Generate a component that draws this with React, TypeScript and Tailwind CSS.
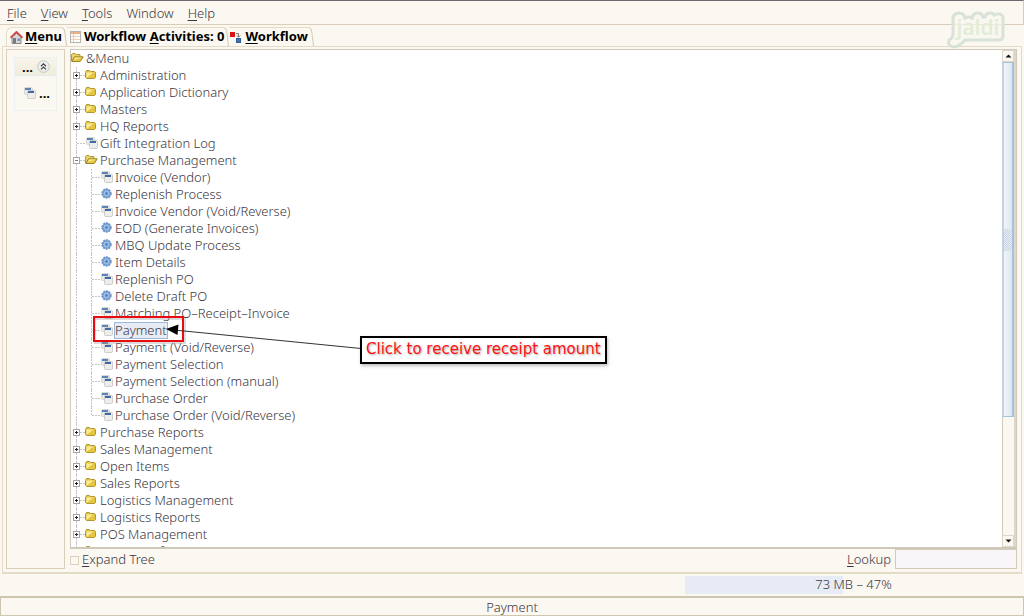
import React from 'react';
import clsx from 'clsx';

type IconKind = 'folder' | 'folderOpen' | 'window' | 'process';

interface TreeNode {
  label: string;
  icon: IconKind;
  children?: TreeNode[];
  expandable?: boolean;
}

const folder = (label: string): TreeNode => ({ label, icon: 'folder', expandable: true });
const win = (label: string): TreeNode => ({ label, icon: 'window' });
const proc = (label: string): TreeNode => ({ label, icon: 'process' });

const nodes: TreeNode[] = [
  folder('Administration'),
  folder('Application Dictionary'),
  folder('Masters'),
  folder('HQ Reports'),
  win('Gift Integration Log'),
  {
    label: 'Purchase Management',
    icon: 'folderOpen',
    expandable: true,
    children: [
      win('Invoice (Vendor)'),
      proc('Replenish Process'),
      win('Invoice Vendor (Void/Reverse)'),
      proc('EOD (Generate Invoices)'),
      proc('MBQ Update Process'),
      proc('Item Details'),
      win('Replenish PO'),
      proc('Delete Draft PO'),
      win('Matching PO–Receipt–Invoice'),
      win('Payment'),
      win('Payment (Void/Reverse)'),
      win('Payment Selection'),
      win('Payment Selection (manual)'),
      win('Purchase Order'),
      win('Purchase Order (Void/Reverse)'),
    ],
  },
  folder('Purchase Reports'),
  folder('Sales Management'),
  folder('Open Items'),
  folder('Sales Reports'),
  folder('Logistics Management'),
  folder('Logistics Reports'),
  folder('POS Management'),
  folder('Data Interface'),
];

const WindowIcon: React.FC = () => (
  <svg width="13" height="13" viewBox="0 0 13 13" className="shrink-0">
    <rect x="0.5" y="0.5" width="8" height="7" rx="1" fill="#e9e9e7" stroke="#d6d6d2" />
    <rect x="1" y="1" width="6" height="2" fill="#5d84b8" />
    <rect x="3.5" y="3.5" width="8" height="8" rx="1" fill="#ededeb" stroke="#cdcdc9" />
    <rect x="4" y="4" width="6" height="2" fill="#3f6aa6" />
  </svg>
);

const ProcessIcon: React.FC = () => (
  <svg width="13" height="13" viewBox="0 0 13 13" className="shrink-0">
    <circle cx="5.5" cy="5.5" r="4.4" fill="#7ba3d6" stroke="#6a95cc" strokeWidth="1.6" strokeDasharray="2 0.8" />
    <circle cx="5.5" cy="5.5" r="2.3" fill="none" stroke="#b4cdec" strokeWidth="0.8" />
    <circle cx="5.5" cy="5.5" r="1" fill="#4a78b4" />
  </svg>
);

const FolderIcon: React.FC = () => (
  <svg width="14" height="13" viewBox="0 0 14 13" className="shrink-0">
    <path d="M0.5 3.5 L1.5 1.5 H4.5 L5.5 2.5 H9.5 L10.5 3.5 V8.5 L9.5 9.5 H1.5 L0.5 8.5 Z" fill="#e6c63e" stroke="#ae9836" />
    <path d="M1.5 3.5 H8.5 L2 8.5 H1.5 Z" fill="#f9eb9a" />
  </svg>
);

const FolderOpenIcon: React.FC = () => (
  <svg width="14" height="13" viewBox="0 0 14 13" className="shrink-0">
    <path d="M0.5 9 V2.5 L1.5 1.5 H4 L5 2.5 H9 V4.5" fill="#ead26a" stroke="#ae9836" />
    <path d="M0.8 9.5 L3.5 4.8 H12.2 L9.3 9.5 Z" fill="#e8c840" stroke="#9c8726" />
    <path d="M4 5.5 H10.5 L3 8 Z" fill="#f9eb9a" />
  </svg>
);

const icons: Record<IconKind, React.FC> = {
  folder: FolderIcon,
  folderOpen: FolderOpenIcon,
  window: WindowIcon,
  process: ProcessIcon,
};

// Dotted connector drawn left of each row
const Guide: React.FC<{ last?: boolean; branch?: boolean }> = ({ last, branch = true }) => (
  <svg width="15" height="17" viewBox="0 0 15 17" className="shrink-0">
    <line x1="5.5" y1="0" x2="5.5" y2={last ? 9 : 17} stroke="#c4c4c4" strokeDasharray="2 1" />
    {branch && <line x1="6" y1="8.5" x2="14" y2="8.5" stroke="#c4c4c4" strokeDasharray="2 1" />}
  </svg>
);

const Expander: React.FC<{ open: boolean; label: string }> = ({ open, label }) => (
  <button type="button" aria-label={`Toggle ${label}`} className="shrink-0">
    <svg width="14" height="17" viewBox="0 0 14 17" className="block">
      <line x1="5.5" y1="0" x2="5.5" y2="17" stroke="#c4c4c4" strokeDasharray="2 1" />
      <line x1="6" y1="8.5" x2="14" y2="8.5" stroke="#c4c4c4" strokeDasharray="2 1" />
      <rect x="2.5" y="5.5" width="6" height="6" fill="#fff" stroke="#a6a6a6" />
      <path d={open ? 'M4 8.5 H7' : 'M4 8.5 H7 M5.5 7 V10'} stroke={open ? '#777' : '#222'} />
    </svg>
  </button>
);

// Red frame, arrow and hint box that hang over the selected entry
const Callout: React.FC = () => (
  <div className="absolute left-0 top-0 z-10 pointer-events-none">
    <svg width="300" height="40" viewBox="0 0 300 40" className="absolute left-[22px] top-[-8px]">
      <rect x="2" y="5" width="90" height="24" fill="none" stroke="#999" strokeWidth="2" opacity="0.35" />
      <rect x="1" y="3" width="89" height="24" fill="none" stroke="#e60c12" strokeWidth="2" />
      <line x1="76" y1="15.5" x2="268" y2="34.5" stroke="#333" strokeWidth="1" />
      <path d="M73 15 L85.5 10.5 L84.5 21 Z" fill="#000" />
    </svg>
    <div className="absolute left-[289px] top-3.5 flex h-7 items-center whitespace-nowrap border-2 border-black bg-white px-1 pb-0.5 font-['DejaVu_Sans',sans-serif] text-[15px] font-normal text-[#ff1010] shadow-[1px_2px_3px_#8888] [text-shadow:1px_1px_2px_#aaa]">
      Click to receive receipt amount
    </div>
  </div>
);

interface RowProps {
  node: TreeNode;
  depth: number;
  last?: boolean;
}

const TreeRow: React.FC<RowProps> = ({ node, depth, last }) => {
  const Icon = icons[node.icon];
  const selected = node.label === 'Payment';

  return (
    <li>
      <div className="relative flex h-[17px] items-center">
        {depth === 2 && <Guide branch={false} />}
        {depth > 0 &&
          (node.expandable ? <Expander open={!!node.children} label={node.label} /> : <Guide last={last} />)}
        <Icon />
        <button
          type="button"
          className={clsx(
            'h-[17px] whitespace-nowrap border leading-[15px]',
            selected ? 'border-[#9db8dc] bg-[#e6ebf4]' : 'border-transparent'
          )}
        >
          {node.label}
        </button>
        {selected && <Callout />}
      </div>
      {node.children && (
        <ul>
          {node.children.map((child, i) => (
            <TreeRow key={child.label} node={child} depth={depth + 1} last={i === node.children!.length - 1} />
          ))}
        </ul>
      )}
    </li>
  );
};

const MenuBar: React.FC = () => (
  <nav className="flex h-[25px] shrink-0 items-center gap-3.5 border-b border-r border-t border-b-[#dacdb8] border-r-[#d6ceb8] border-t-[#6b6870] px-[7px]">
    {['File', 'View', 'Tools', 'Window', 'Help'].map((item) => (
      <button key={item} type="button" className="leading-4">
        {item === 'Window' ? item : <><u className="underline-offset-2">{item[0]}</u>{item.slice(1)}</>}
      </button>
    ))}
  </nav>
);

const HomeIcon: React.FC = () => (
  <svg width="13" height="13" viewBox="0 0 13 13">
    <path d="M2 6 V12.5 H11 V6 L6.5 2 Z" fill="#d6d8d8" stroke="#888" />
    <path d="M0.5 6.8 L6.5 1 L12.5 6.8" fill="none" stroke="#cc4a4a" strokeWidth="2" />
    <rect x="3" y="7" width="3" height="5" fill="#7b7b7b" />
    <rect x="7.5" y="7.5" width="2.5" height="2.5" fill="#6f93c0" />
  </svg>
);

const ActivitiesIcon: React.FC = () => (
  <svg width="11" height="12" viewBox="0 0 11 12">
    <rect x="0.5" y="0.5" width="10" height="11" fill="#fdfdfb" stroke="#b4b4b4" />
    <rect x="1" y="1" width="9" height="2" fill="#f0b088" />
    <path d="M1 5.5 H10 M1 8.5 H10" stroke="#ecd2b8" />
    <path d="M3.5 3 V11" stroke="#d0d0d0" />
  </svg>
);

const WorkflowIcon: React.FC = () => (
  <svg width="12" height="13" viewBox="0 0 12 13">
    <rect x="0" y="1" width="5" height="5" fill="#d81414" />
    <path d="M6 2.5 H8.5 V6 M6.8 4.5 L8.5 6.2 L10.2 4.5" fill="none" stroke="#777" />
    <rect x="6.5" y="7.5" width="4" height="4" fill="#4773b4" stroke="#345c98" />
  </svg>
);

const TabEdge: React.FC = () => (
  <svg width="5" height="19" viewBox="0 0 5 19" className="shrink-0">
    <path d="M0 0.5 Q2.5 1 2.8 5 L4.5 19" fill="none" stroke="#d3c9b0" />
  </svg>
);

const Tabs: React.FC = () => (
  <div role="tablist" className="flex h-[19px] items-stretch pl-1 font-bold text-black">
    <button type="button" role="tab" aria-selected="true" className="flex items-center gap-0.5 rounded-tl-md border-l border-t border-[#e6dcc2] bg-[#fcf9f2] pl-[3px]">
      <HomeIcon />
      <span><u className="underline-offset-2">M</u>enu</span>
    </button>
    <TabEdge />
    <button type="button" role="tab" aria-selected="false" className="flex items-center gap-[3px] border-t border-[#e6dcc2] pl-[3px]">
      <ActivitiesIcon />
      <span>Workflow <u className="underline-offset-2">A</u>ctivities: 0</span>
    </button>
    <TabEdge />
    <button type="button" role="tab" aria-selected="false" className="flex items-center gap-[3px] border-t border-[#e6dcc2] px-px">
      <WorkflowIcon />
      <span><u className="underline-offset-2">W</u>orkflow</span>
    </button>
    <TabEdge />
  </div>
);

const Logo: React.FC = () => (
  <svg width="60" height="38" viewBox="0 0 60 38" className="pointer-events-none absolute right-[18px] top-[11px]">
    <path
      d="M7 8 Q7 2 13 2 Q18 2 19 7 Q23 5 26 7 Q27 2 32 2 Q36 2 37 6 L39 6 Q40 2 44 2 Q47 2 48 4 Q55 1 57 6 V25 Q57 29 53 29 H19 Q13 36 8 36 Q1 35 3 29 Q7 27 7 23 Z"
      fill="#f8f6ee"
      fillOpacity="0.7"
      stroke="#d9e2d6"
      strokeWidth="3"
    />
    <text x="32" y="24" textAnchor="middle" fill="#e0edd5" className="font-['Open_Sans',sans-serif] text-[21px] font-semibold">
      jaldi
    </text>
  </svg>
);

const SideBar: React.FC = () => (
  <aside className="w-[59px] shrink-0 border border-[#d9cfb8] px-[7px] py-[7px] font-bold text-black">
    <div className="border border-[#eef0f2]">
      <button type="button" className="flex h-[18px] w-full items-center gap-1 border-b border-[#e6ebf0] bg-gradient-to-b from-[#f8f4ea] to-[#f1eddb] pl-[7px]">
        <span className="leading-4">...</span>
        <svg width="13" height="13" viewBox="0 0 13 13">
          <circle cx="6.5" cy="6.5" r="5.8" fill="#eceef0" stroke="#c2c5c8" />
          <path d="M4 6.2 L6.5 3.8 L9 6.2 M4 9.4 L6.5 7 L9 9.4" fill="none" stroke="#444" strokeWidth="1.2" />
        </svg>
      </button>
      <button type="button" className="flex h-[34px] w-full items-center gap-0.5 pl-[9px]">
        <WindowIcon />
        <span className="leading-4">...</span>
      </button>
    </div>
  </aside>
);

const ScrollBar: React.FC = () => (
  <div className="flex w-[14px] shrink-0 flex-col border-r-2 border-[#dcd6cb] bg-[#fbf8f1]">
    <button type="button" aria-label="Scroll up" className="flex h-3 shrink-0 items-center justify-center border border-[#ded6c6]">
      <svg width="7" height="4" viewBox="0 0 7 4"><path d="M0.5 3.5 L3.5 0.5 L6.5 3.5 Z" fill="#111" /></svg>
    </button>
    <div className="flex grow-[3] basis-0 items-center justify-center border-x-2 border-y border-[#a9bfdc] border-l-[#c3d1e4] bg-gradient-to-r from-[#f1f4f9] to-[#dfe6f0]">
      <div className="h-[22px] w-2 bg-[repeating-conic-gradient(#c3d0e2_0_25%,#edf1f7_0_50%)] bg-[length:2px_2px]" />
    </div>
    <div className="grow basis-0 border-l border-[#d3cabb]" />
    <button type="button" aria-label="Scroll down" className="flex h-3 shrink-0 items-center justify-center border border-[#ded6c6]">
      <svg width="7" height="4" viewBox="0 0 7 4"><path d="M0.5 0.5 L3.5 3.5 L6.5 0.5 Z" fill="#111" /></svg>
    </button>
  </div>
);

const App: React.FC = () => {
  return (
    <div className="relative flex h-screen flex-col overflow-hidden bg-[#fbf8f1] font-['Noto_Sans',sans-serif] text-[13px] font-light text-[#3c3642]">
      <MenuBar />
      <Logo />

      <div className="flex min-h-0 flex-1 flex-col px-0.5 pt-0.5">
        <Tabs />

        <main className="flex min-h-0 flex-1 gap-[5px] border border-b-2 border-[#e4dac8] px-[3px] pb-[3px] pt-0.5">
          <SideBar />

          <section className="flex min-w-0 flex-1 flex-col pr-px">
            {/* Tree */}
            <div className="flex min-h-0 flex-1 border border-b-2 border-[#cfc9bb] bg-white">
              <ul className="min-w-0 flex-1 overflow-hidden">
                <TreeRow node={{ label: '&Menu', icon: 'folderOpen', children: nodes }} depth={0} />
              </ul>
              <ScrollBar />
            </div>

            {/* Search row */}
            <div className="flex h-5 shrink-0 items-center justify-between">
              <label className="flex items-center gap-[3px] pt-0.5">
                <input type="checkbox" className="size-[9px] appearance-none border border-[#d8d2bc] bg-[#fbf8f1]" />
                <span><u className="underline-offset-2">E</u>xpand Tree</span>
              </label>
              <div className="flex items-center gap-1">
                <label htmlFor="lookup" className="pt-0.5"><u className="underline-offset-2">L</u>ookup</label>
                <input id="lookup" type="text" className="h-5 w-[122px] border border-[#d3cbb8] bg-[#f9f6fa] px-1" />
              </div>
            </div>
          </section>
        </main>
      </div>

      {/* Memory usage */}
      <div className="flex h-[22px] shrink-0 justify-end py-0.5 pr-0.5">
        <div className="flex w-[337px] items-center justify-center bg-[linear-gradient(to_right,#e6ebf5_47%,transparent_47%)]">
          73 MB – 47%
        </div>
      </div>

      <footer className="flex h-5 shrink-0 items-center justify-center border border-t-2 border-[#cfc6b2] leading-4">
        Payment
      </footer>
    </div>
  );
};

export default App;
